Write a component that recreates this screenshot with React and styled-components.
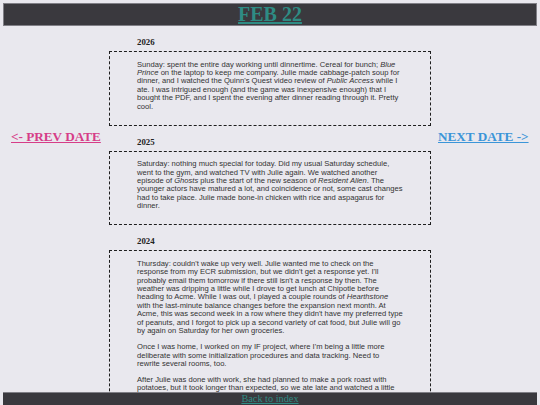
import React from 'react';
import styled, { createGlobalStyle } from 'styled-components';

const GlobalStyle = createGlobalStyle`
  html, body {
    margin: 0;
    padding: 0;
    background: #e9e8ee;
  }
  body {
    font-family: "Liberation Serif", "Times New Roman", serif;
    color: #222;
  }
`;

const Page = styled.div`
  padding: 3px 3px 20px;
`;

const Header = styled.header`
  background: #3a393e;
  border: 1px solid #807f86;
  height: 21px;
  display: flex;
  align-items: center;
  justify-content: center;
`;

const Title = styled.a`
  font-family: "Liberation Serif", serif;
  font-weight: bold;
  font-size: 20px;
  line-height: 21px;
  color: #2e8c84;
  text-decoration: underline;
`;

const Columns = styled.div`
  display: grid;
  grid-template-columns: 106px 322px 1fr;
`;

const Side = styled.div`
  padding-top: 101px;
  padding-left: ${p => p.$left || 0}px;
`;

const NavLink = styled.a`
  font-family: "Liberation Serif", serif;
  font-weight: bold;
  font-size: 13.2px;
  line-height: 15px;
  color: ${p => p.$color};
  text-decoration: underline;
  white-space: nowrap;
`;

const Entries = styled.main`
  display: flex;
  flex-direction: column;
`;

const Year = styled.h4`
  font-family: "Liberation Serif", serif;
  font-weight: bold;
  font-size: 8.8px;
  line-height: 10px;
  margin: 11px 0 4px 28px;
  color: #222;
`;

const Entry = styled.div`
  border: 1px dashed #1e1e1e;
  padding: 1px 27px 6px;
`;

const Para = styled.p`
  font-family: "Liberation Sans", Arial, sans-serif;
  font-size: 7.6px;
  line-height: 8.4px;
  margin: 7.6px 0;
  color: #333;

  i {
    line-height: 8.4px;
  }
`;

const Footer = styled.footer`
  position: fixed;
  left: 3px;
  right: 3px;
  bottom: 0;
  height: 12px;
  background: #3a393e;
  border-top: 1px solid #807f86;
  display: flex;
  justify-content: center;
  align-items: center;
`;

const FooterLink = styled.a`
  font-family: "Liberation Serif", serif;
  font-size: 10.3px;
  line-height: 12px;
  color: #2e8c84;
  text-decoration: underline;
`;

const entries = [
  {
    year: '2026',
    paras: [
      <>Sunday: spent the entire day working until dinnertime. Cereal for bunch; <i>Blue Prince</i> on the laptop to keep me company. Julie made cabbage-patch soup for dinner, and I watched the Quinn's Quest video review of <i>Public Access</i> while I ate. I was intrigued enough (and the game was inexpensive enough) that I bought the PDF, and I spent the evening after dinner reading through it. Pretty cool.</>,
    ],
  },
  {
    year: '2025',
    paras: [
      <>Saturday: nothing much special for today. Did my usual Saturday schedule, went to the gym, and watched TV with Julie again. We watched another episode of <i>Ghosts</i> plus the start of the new season of <i>Resident Alien</i>. The younger actors have matured a lot, and coincidence or not, some cast changes had to take place. Julie made bone-in chicken with rice and aspagarus for dinner.</>,
    ],
  },
  {
    year: '2024',
    paras: [
      <>Thursday: couldn't wake up very well. Julie wanted me to check on the response from my ECR submission, but we didn't get a response yet. I'll probably email them tomorrow if there still isn't a response by then. The weather was dripping a little while I drove to get lunch at Chipotle before heading to Acme. While I was out, I played a couple rounds of <i>Hearthstone</i> with the last-minute balance changes before the expansion next month. At Acme, this was second week in a row where they didn't have my preferred type of peanuts, and I forgot to pick up a second variety of cat food, but Julie will go by again on Saturday for her own groceries.</>,
      <>Once I was home, I worked on my IF project, where I'm being a little more deliberate with some initialization procedures and data tracking. Need to rewrite several rooms, too.</>,
      <>After Julie was done with work, she had planned to make a pork roast with potatoes, but it took longer than expected, so we ate late and watched a little TV before bed.</>,
    ],
  },
];

export default function App() {
  return (
    <Page>
      <GlobalStyle />
      <Header>
        <Title href="#">FEB 22</Title>
      </Header>
      <Columns>
        <Side $left={8}>
          <NavLink href="#" $color="#d63d88">&lt;- PREV DATE</NavLink>
        </Side>
        <Entries>
          {entries.map(entry => (
            <section key={entry.year}>
              <Year>{entry.year}</Year>
              <Entry>
                {entry.paras.map((p, i) => <Para key={i}>{p}</Para>)}
              </Entry>
            </section>
          ))}
        </Entries>
        <Side $left={7}>
          <NavLink href="#" $color="#3b95d8">NEXT DATE -&gt;</NavLink>
        </Side>
      </Columns>
      <Footer>
        <FooterLink href="#">Back to index</FooterLink>
      </Footer>
    </Page>
  );
}
